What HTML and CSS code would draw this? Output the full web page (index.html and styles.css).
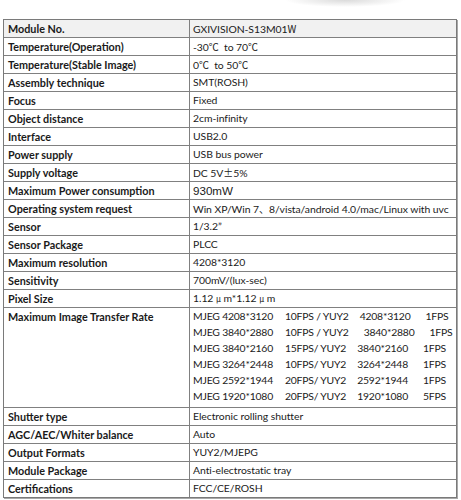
FILE: index.html
```html
<!DOCTYPE html>
<html lang="en">
<head>
<meta charset="utf-8">
<title>GXIVISION-S13M01W Specifications</title>
<link rel="stylesheet" href="styles.css">
</head>
<body>
<div class="page">
  <div class="spec">
    <div class="row head"><div class="k">Module No.</div><div class="v">GXIVISION-S13M01<span class="cjk">W</span></div></div>
    <div class="row"><div class="k">Temperature(Operation)</div><div class="v">-30<span class="cjk">℃</span>&nbsp; to 70<span class="cjk">℃</span></div></div>
    <div class="row"><div class="k">Temperature(Stable Image)</div><div class="v">0<span class="cjk">℃</span>&nbsp; to 50<span class="cjk">℃</span></div></div>
    <div class="row"><div class="k">Assembly technique</div><div class="v">SMT(ROSH)</div></div>
    <div class="row"><div class="k">Focus</div><div class="v">Fixed</div></div>
    <div class="row"><div class="k">Object distance</div><div class="v">2cm-infinity</div></div>
    <div class="row"><div class="k">Interface</div><div class="v">USB2.0</div></div>
    <div class="row"><div class="k">Power supply</div><div class="v">USB bus power</div></div>
    <div class="row"><div class="k">Supply voltage</div><div class="v">DC 5V<span class="cjk">±</span>5%</div></div>
    <div class="row"><div class="k">Maximum Power consumption</div><div class="v"><span class="arial">930mW</span></div></div>
    <div class="row"><div class="k">Operating system request</div><div class="v">Win XP/Win 7<span class="cjk">、</span>8/vista/android 4.0/mac/Linux with uvc</div></div>
    <div class="row"><div class="k">Sensor</div><div class="v">1/3.2”</div></div>
    <div class="row"><div class="k">Sensor Package</div><div class="v">PLCC</div></div>
    <div class="row"><div class="k">Maximum resolution</div><div class="v">4208*3120</div></div>
    <div class="row"><div class="k">Sensitivity</div><div class="v">700mV/(lux-sec)</div></div>
    <div class="row"><div class="k">Pixel Size</div><div class="v">1.12 <span class="mu">μ</span> m*1.12 <span class="mu">μ</span> m</div></div>
    <div class="row tall">
      <div class="k">Maximum Image Transfer Rate</div>
      <div class="v lines">
        <div class="line"><span>MJEG 4208*3120</span><span class="s2">10FPS / YUY2</span><span class="s3">4208*3120</span><span class="s4">1FPS</span></div>
        <div class="line"><span>MJEG 3840*2880</span><span class="s2">10FPS / YUY2</span><span class="s3 wide">3840*2880</span><span class="s4">1FPS</span></div>
        <div class="line"><span>MJEG 3840*2160</span><span class="s2">15FPS/ YUY2</span><span class="s3">3840*2160</span><span class="s4">1FPS</span></div>
        <div class="line"><span>MJEG 3264*2448</span><span class="s2">10FPS/ YUY2</span><span class="s3">3264*2448</span><span class="s4">1FPS</span></div>
        <div class="line"><span>MJEG 2592*1944</span><span class="s2">20FPS/ YUY2</span><span class="s3">2592*1944</span><span class="s4">1FPS</span></div>
        <div class="line"><span>MJEG 1920*1080</span><span class="s2">20FPS/ YUY2</span><span class="s3">1920*1080</span><span class="s4">5FPS</span></div>
      </div>
    </div>
    <div class="row"><div class="k">Shutter type</div><div class="v">Electronic rolling shutter</div></div>
    <div class="row"><div class="k">AGC/AEC/Whiter balance</div><div class="v">Auto</div></div>
    <div class="row"><div class="k">Output Formats</div><div class="v">YUY2/MJEPG</div></div>
    <div class="row"><div class="k">Module Package</div><div class="v">Anti-electrostatic tray</div></div>
    <div class="row last"><div class="k">Certifications</div><div class="v">FCC/CE/ROSH</div></div>
  </div>
</div>
</body>
</html>
```
FILE: styles.css
```css
html, body {
  margin: 0;
  padding: 0;
  background: #ffffff;
}
body {
  width: 461px;
  height: 500px;
  overflow: hidden;
  font-family: Lato, "Noto Sans", sans-serif;
  color: #1a1a1a;
  background: radial-gradient(ellipse 60px 7px at 345px 0px, rgba(150,150,150,0.35), rgba(255,255,255,0) 100%), #ffffff;
}
.page {
  padding: 19px 4px 0 3px;
}
.spec {
  border: 1px solid #7a7a7a;
  box-shadow: 1px 1px 0 #a8a8a8;
}
.row {
  display: grid;
  grid-template-columns: 186px 1fr;
  border-bottom: 1px solid #808080;
}
.row.last {
  border-bottom: none;
}
.row.head {
  background: #f1f1f1;
}
.k, .v {
  height: 17px;
  line-height: 17px;
  white-space: nowrap;
}
.k {
  font-size: 10.8px;
  font-weight: 700;
  padding-left: 4px;
  border-right: 1px solid #808080;
}
.v {
  font-size: 10.4px;
  letter-spacing: -0.05px;
  padding-left: 3px;
  overflow: hidden;
}
.row.tall .k,
.row.tall .v {
  height: auto;
}
.lines {
  padding-bottom: 3px;
  letter-spacing: -0.2px;
}
.line {
  display: flex;
  height: 16px;
  line-height: 16px;
}
.s2 { margin-left: 12px; }
.s3 { margin-left: 11px; }
.s3.wide { margin-left: 15px; }
.s4 { margin-left: 15px; }
.cjk {
  font-family: "Noto Sans CJK SC", sans-serif;
  font-size: 10px;
  letter-spacing: 0;
}
.mu {
  font-family: "Noto Sans CJK SC", sans-serif;
  font-size: 8px;
  letter-spacing: 0;
}
.arial {
  font-family: "Liberation Sans", Arial, sans-serif;
  font-size: 11.6px;
  letter-spacing: 0;
}
```
